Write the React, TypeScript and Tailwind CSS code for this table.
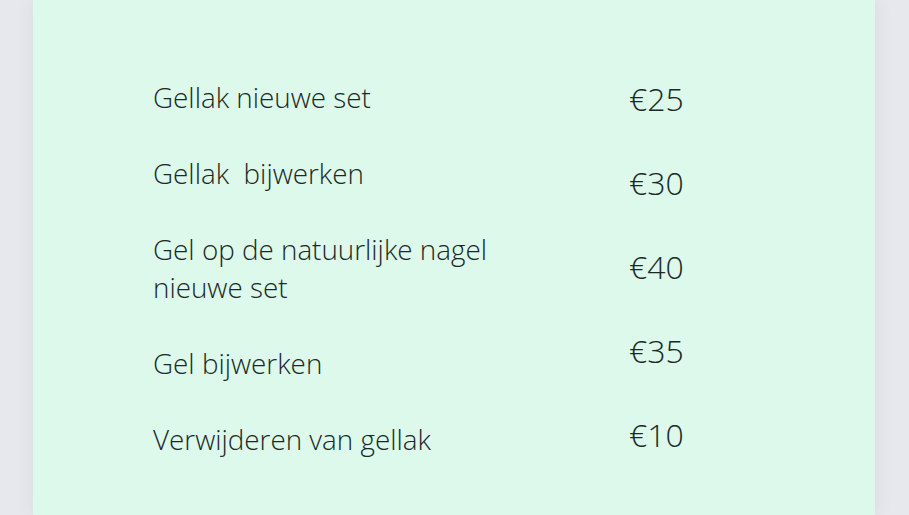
export default function App() {
  const items = [
    ["Gellak nieuwe set"],
    ["Gellak\u00a0 bijwerken"],
    ["Gel op de natuurlijke nagel", "nieuwe set"],
    ["Gel bijwerken"],
    ["Verwijderen van gellak"],
  ];
  const prices = ["€25", "€30", "€40", "€35", "€10"];
  return (
    <div className="w-[909px] h-[515px] overflow-hidden bg-[#e7e8ed] flex" style={{ fontFamily: '"Open Sans", sans-serif' }}>
      <div className="ml-[33px] w-[842px] h-full bg-[#dcf9ec] shadow-[0_0_18px_rgba(60,60,90,0.08)] flex pt-[78px] pl-[120px] text-[#1b2925] font-light">
        <div className="w-[476px] flex flex-col gap-[38px] text-[27.8px] leading-[38px]">
          {items.map((lines, i) => (
            <div key={i}>
              {lines.map((l, j) => (
                <div key={j} className="whitespace-pre">{l}</div>
              ))}
            </div>
          ))}
        </div>
        <div className="flex flex-col gap-[42px] text-[32px] leading-[42px]">
          {prices.map((p) => (
            <div key={p}>{p}</div>
          ))}
        </div>
      </div>
    </div>
  );
}
